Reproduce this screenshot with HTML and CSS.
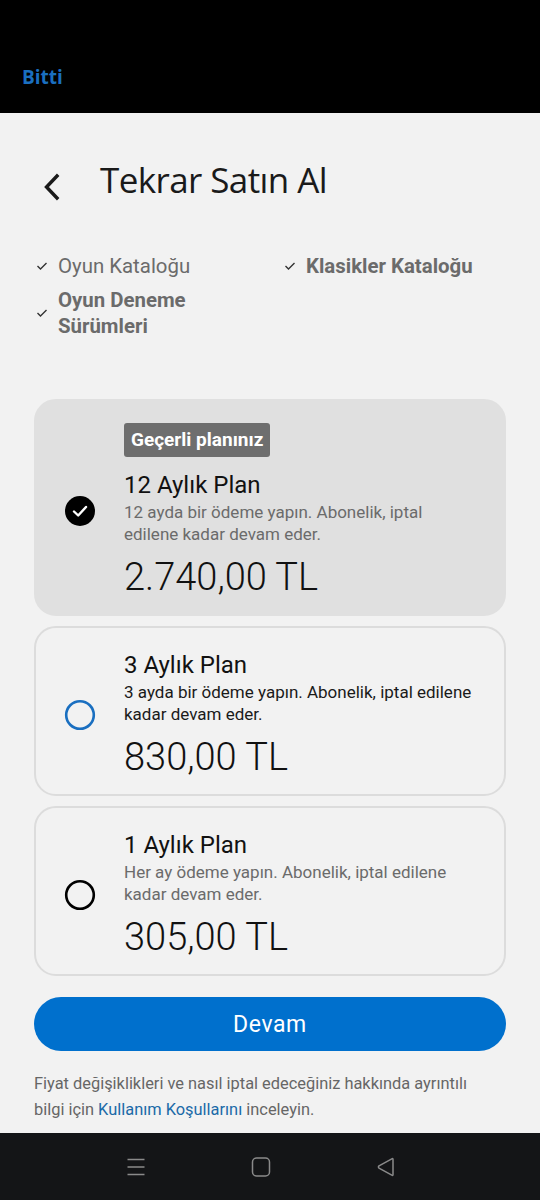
FILE: index.html
```html
<!DOCTYPE html>
<html>
	<head>
		<title>Tekrar Satın Al</title>
		<meta name="viewport" content="width=device-width, initial-scale=1" />
		<link rel="stylesheet" href="styles.css">
	</head>
	<body>
		<div class="topbar">
			<span class="done">Bitti</span>
		</div>

		<div class="page">
			<div class="header">
				<svg class="back" width="24" height="30" viewBox="0 0 24 30">
					<path d="M17 4 L6.5 15 L17 26" fill="none" stroke="#1a1a1a" stroke-width="3.4" stroke-linecap="square" />
				</svg>
				<h1>Tekrar Satın Al</h1>
			</div>

			<div class="features">
				<div class="feature">
					<svg class="tick" width="12" height="10" viewBox="0 0 12 10">
						<path d="M1.5 5 L4.5 8 L10.5 2" fill="none" stroke="#333" stroke-width="1.4" />
					</svg>
					<span>Oyun Kataloğu</span>
				</div>
				<div class="feature bold">
					<svg class="tick" width="12" height="10" viewBox="0 0 12 10">
						<path d="M1.5 5 L4.5 8 L10.5 2" fill="none" stroke="#333" stroke-width="1.4" />
					</svg>
					<span>Klasikler Kataloğu</span>
				</div>
				<div class="feature bold">
					<svg class="tick" width="12" height="10" viewBox="0 0 12 10">
						<path d="M1.5 5 L4.5 8 L10.5 2" fill="none" stroke="#333" stroke-width="1.4" />
					</svg>
					<span>Oyun Deneme<br>Sürümleri</span>
				</div>
			</div>

			<div class="plans">
				<div class="plan current">
					<div class="radio">
						<svg width="32" height="32" viewBox="0 0 32 32">
							<circle cx="16" cy="16" r="15" fill="#000" />
							<path d="M10 16.5 L14.2 20.5 L22 12" fill="none" stroke="#fff" stroke-width="2.4" stroke-linecap="round" stroke-linejoin="round" />
						</svg>
					</div>
					<div class="info">
						<div class="badge">Geçerli planınız</div>
						<div class="name">12 Aylık Plan</div>
						<div class="desc">12 ayda bir ödeme yapın. Abonelik, iptal edilene kadar devam eder.</div>
						<div class="price">2.740,00 TL</div>
					</div>
				</div>

				<div class="plan">
					<div class="radio">
						<svg width="32" height="32" viewBox="0 0 32 32">
							<circle cx="16" cy="16" r="13.8" fill="none" stroke="#1a6fc0" stroke-width="2.6" />
						</svg>
					</div>
					<div class="info">
						<div class="name">3 Aylık Plan</div>
						<div class="desc dark">3 ayda bir ödeme yapın. Abonelik, iptal edilene kadar devam eder.</div>
						<div class="price">830,00 TL</div>
					</div>
				</div>

				<div class="plan">
					<div class="radio">
						<svg width="32" height="32" viewBox="0 0 32 32">
							<circle cx="16" cy="16" r="13.8" fill="none" stroke="#000" stroke-width="2.6" />
						</svg>
					</div>
					<div class="info">
						<div class="name">1 Aylık Plan</div>
						<div class="desc">Her ay ödeme yapın. Abonelik, iptal edilene kadar devam eder.</div>
						<div class="price">305,00 TL</div>
					</div>
				</div>
			</div>

			<button class="continue">Devam</button>

			<p class="terms">Fiyat değişiklikleri ve nasıl iptal edeceğiniz hakkında ayrıntılı bilgi için <a href="#">Kullanım Koşullarını</a> inceleyin.</p>
		</div>

		<div class="navbar">
			<svg width="20" height="20" viewBox="0 0 20 20">
				<path d="M1.5 2.5 H18.5 M1.5 10 H18.5 M1.5 17.5 H18.5" stroke="#8a8a8a" stroke-width="1.5" />
			</svg>
			<svg width="20" height="20" viewBox="0 0 20 20">
				<rect x="1.5" y="1" width="17" height="18" rx="4" fill="none" stroke="#8a8a8a" stroke-width="1.5" />
			</svg>
			<svg width="20" height="20" viewBox="0 0 20 20">
				<path d="M17 2.5 V17.5 Q17 18.8 15.8 18.2 L3 11.1 Q1.8 10 3 8.9 L15.8 1.8 Q17 1.2 17 2.5 Z" fill="none" stroke="#8a8a8a" stroke-width="1.5" stroke-linejoin="round" />
			</svg>
		</div>
	</body>
</html>
```

FILE: styles.css
```css
body {
	margin: 0;
	background-color: #f2f2f2;
	font-family: Roboto, "Noto Sans", sans-serif;
	width: 540px;
	height: 1200px;
	display: flex;
	flex-direction: column;
}
.topbar {
	background-color: #000;
	height: 113px;
	box-sizing: border-box;
	display: flex;
	align-items: flex-end;
	padding: 0 0 23px 22px;
}
.done {
	color: #1a6fc0;
	font-family: "Open Sans", sans-serif;
	font-weight: 700;
	font-size: 19px;
	line-height: 26px;
}
.page {
	flex: 1;
	padding: 0 34px;
}
.header {
	display: flex;
	align-items: center;
	padding-top: 44px;
}
.back {
	margin: 13px 0 0 6px;
}
h1 {
	margin: 0 0 0 36px;
	font-family: "Open Sans", sans-serif;
	font-weight: 400;
	font-size: 35px;
	line-height: 46px;
	letter-spacing: -0.6px;
	color: #1a1a1a;
}
.features {
	display: grid;
	grid-template-columns: 248px 1fr;
	row-gap: 8px;
	margin-top: 50px;
	color: #6b6b6b;
	font-size: 20.4px;
	line-height: 26px;
}
.feature {
	display: flex;
	align-items: center;
}
.feature.bold {
	font-weight: 700;
}
.tick {
	margin: 0 10px 0 2px;
	flex-shrink: 0;
}
.plans {
	display: flex;
	flex-direction: column;
	gap: 10px;
	margin-top: 60px;
}
.plan {
	display: flex;
	align-items: center;
	border: 2px solid #dcdcdc;
	border-radius: 22px;
	padding: 22px 26px 15px 0;
}
.plan.current {
	background-color: #e0e0e0;
	border-color: #e0e0e0;
}
.radio {
	width: 88px;
	display: flex;
	justify-content: center;
	flex-shrink: 0;
}
.radio svg {
	display: block;
}
.info {
	flex: 1;
}
.badge {
	width: fit-content;
	background-color: #6e6e6e;
	color: #fff;
	font-weight: 700;
	font-size: 19px;
	line-height: 34px;
	padding: 0 7px;
	border-radius: 3px;
	margin-bottom: 13px;
}
.name {
	font-size: 24px;
	line-height: 30px;
	color: #111;
}
.desc {
	font-size: 17px;
	line-height: 22px;
	color: #6b6b6b;
	margin-top: 1px;
}
.desc.dark {
	color: #1a1a1a;
}
.price {
	font-size: 38px;
	font-weight: 300;
	line-height: 44px;
	color: #111;
	margin-top: 10px;
}
.continue {
	display: block;
	width: 100%;
	height: 54px;
	margin-top: 21px;
	border: none;
	border-radius: 27px;
	background-color: #0070cd;
	color: #fff;
	font-family: Roboto, sans-serif;
	font-size: 23px;
	letter-spacing: 0.6px;
	cursor: pointer;
}
.terms {
	margin: 20px 0 0;
	padding-right: 30px;
	font-size: 16.4px;
	line-height: 26px;
	color: #666;
}
.terms a {
	color: #1b6aa8;
	text-decoration: none;
}
.navbar {
	background-color: #141517;
	height: 67px;
	display: flex;
	align-items: center;
	gap: 105px;
	padding-left: 126px;
}
```
